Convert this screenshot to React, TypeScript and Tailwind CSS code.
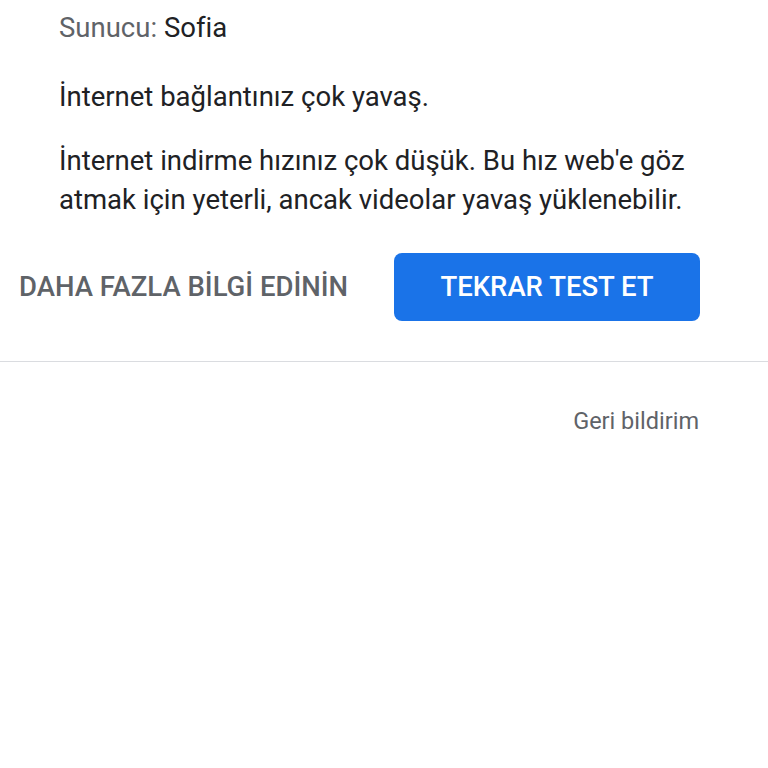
import React from "react";

export default function App() {
  return (
    <div className="w-[768px] h-[768px] bg-white overflow-hidden [font-variant-ligatures:none]" style={{ fontFamily: "Roboto, 'Noto Sans', sans-serif" }}>
      <div className="pl-[59px] pr-[40px]">
        <div className="pt-[10px] text-[27.5px] leading-[36px] text-[#202124]">
          <span className="text-[#5f6368]">Sunucu:</span> Sofia
        </div>
        <p className="mt-[32px] text-[27.5px] leading-[38px] text-[#202124]">İnternet bağlantınız çok yavaş.</p>
        <p className="mt-[25px] text-[27.5px] leading-[39px] text-[#202124]">
          İnternet indirme hızınız çok düşük. Bu hız web'e göz atmak için yeterli, ancak videolar yavaş yüklenebilir.
        </p>
      </div>
      <div className="mt-[34px] flex items-center pl-[19px]">
        <button className="text-[27.5px] font-medium text-[#5f6368] w-[375px] text-left whitespace-nowrap">DAHA FAZLA BİLGİ EDİNİN</button>
        <button className="w-[306px] h-[68px] rounded-[8px] bg-[#1a73e8] text-white text-[27.5px] font-medium">TEKRAR TEST ET</button>
      </div>
      <div className="mt-[40px] h-px bg-[#dadce0]" />
      <div className="flex justify-end pr-[69px] pt-[42px] text-[23.5px] text-[#5f6368]">Geri bildirim</div>
    </div>
  );
}
